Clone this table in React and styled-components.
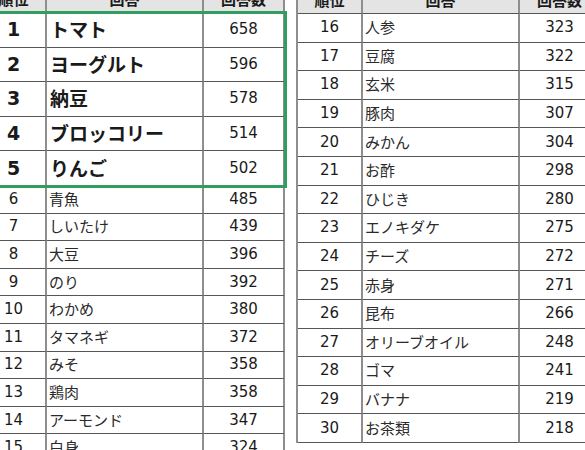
import React from 'react';
import styled, { createGlobalStyle } from 'styled-components';

const GlobalStyle = createGlobalStyle`
	html, body {
		margin: 0;
		padding: 0;
		background: #ffffff;
		overflow: hidden;
	}
	body {
		font-family: 'DejaVu Sans', 'Noto Sans CJK JP', sans-serif;
		color: #1c1c1c;
	}
`;

const topFive = [
	[1, 'トマト', 658],
	[2, 'ヨーグルト', 596],
	[3, '納豆', 578],
	[4, 'ブロッコリー', 514],
	[5, 'りんご', 502],
];

const leftRest = [
	[6, '青魚', 485],
	[7, 'しいたけ', 439],
	[8, '大豆', 396],
	[9, 'のり', 392],
	[10, 'わかめ', 380],
	[11, 'タマネギ', 372],
	[12, 'みそ', 358],
	[13, '鶏肉', 358],
	[14, 'アーモンド', 347],
	[15, '白身', 324],
];

const rightRows = [
	[16, '人参', 323],
	[17, '豆腐', 322],
	[18, '玄米', 315],
	[19, '豚肉', 307],
	[20, 'みかん', 304],
	[21, 'お酢', 298],
	[22, 'ひじき', 280],
	[23, 'エノキダケ', 275],
	[24, 'チーズ', 272],
	[25, '赤身', 271],
	[26, '昆布', 266],
	[27, 'オリーブオイル', 248],
	[28, 'ゴマ', 241],
	[29, 'バナナ', 219],
	[30, 'お茶類', 218],
];

const Sheet = ({ rows, children, rowHeight, top }) => (
	<Table $top={top}>
		<Row $height={28} $header>
			<Cell $align='center' $header>順位</Cell>
			<Cell $align='center' $header>回答</Cell>
			<Cell $align='center' $header>回答数</Cell>
		</Row>
		{children}
		{rows.map(([rank, name, count]) => (
			<Row key={rank} $height={rowHeight}>
				<Cell $align='center'>{rank}</Cell>
				<Cell $align='left' $jp>{name}</Cell>
				<Cell $align='center'>{count}</Cell>
			</Row>
		))}
	</Table>
);

const App = () => {
	return (
		<>
			<GlobalStyle />
			<Page>
				<Sheet rows={leftRest} rowHeight={27.6} top={-15}>
					<Highlight>
						{topFive.map(([rank, name, count]) => (
							<Row key={rank} $height={34.6}>
								<Cell $align='center' $bold>{rank}</Cell>
								<Cell $align='left' $jp $bold>{name}</Cell>
								<Cell $align='center'>{count}</Cell>
							</Row>
						))}
					</Highlight>
				</Sheet>
				<Sheet rows={rightRows} rowHeight={28.6} top={-14} />
			</Page>
		</>
	);
};

export default App;

const Page = styled.div`
	display: flex;
	align-items: flex-start;
	gap: 11px;
	margin-left: -20px;
`;

const Table = styled.div`
	display: flex;
	flex-direction: column;
	margin-top: ${(p) => p.$top}px;
	border-left: 2px solid #8e8e8e;
`;

const Highlight = styled.div`
	position: relative;
	z-index: 1;
	display: flex;
	flex-direction: column;
	outline: 3px solid #2f9e5e;
	outline-offset: -1px;
`;

const Row = styled.div`
	display: grid;
	grid-template-columns: 65px 157px 81px;
	height: ${(p) => p.$height}px;
	background: ${(p) => (p.$header ? '#e4e4e4' : '#ffffff')};
`;

const Cell = styled.div`
	box-sizing: border-box;
	display: flex;
	align-items: center;
	justify-content: ${(p) => (p.$align === 'center' ? 'center' : 'flex-start')};
	padding-left: ${(p) => (p.$align === 'left' ? (p.$bold ? '3px' : '2px') : '0')};
	padding-bottom: ${(p) => (p.$jp ? '2px' : '0')};
	border-right: 2px solid #8e8e8e;
	border-bottom: 1px solid #555555;
	font-family: ${(p) =>
		p.$jp || p.$header
			? "'Noto Sans CJK JP', sans-serif"
			: "'DejaVu Sans', 'Noto Sans CJK JP', sans-serif"};
	font-size: ${(p) => (p.$bold ? '19px' : '15px')};
	font-weight: ${(p) => (p.$bold || p.$header ? 700 : 400)};
	color: ${(p) => (p.$jp && !p.$bold ? '#2a2a2a' : '#1a1a1a')};
	white-space: nowrap;
	overflow: hidden;
	line-height: 1;
`;
